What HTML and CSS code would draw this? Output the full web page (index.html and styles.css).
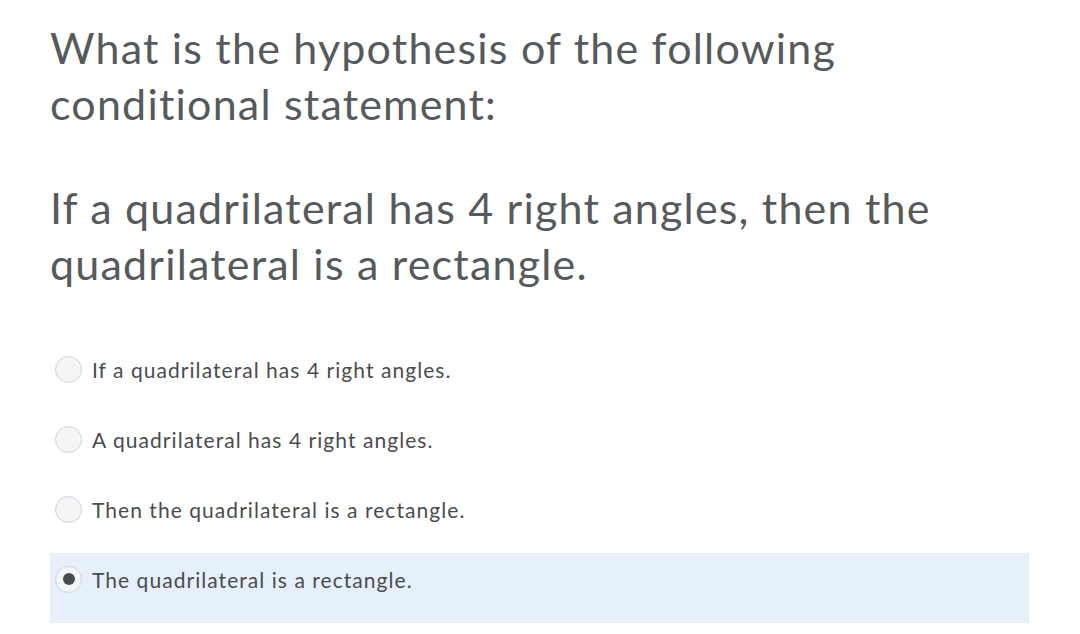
FILE: index.html
```html
<!DOCTYPE html>
<html>
<head>
<meta charset="utf-8">
<link rel="stylesheet" href="styles.css">
</head>
<body>
<div class="question">
  <p class="stem">What is the hypothesis of the following conditional statement:</p>
  <p class="stem stmt">If a quadrilateral has 4 right angles, then the quadrilateral is a rectangle.</p>
  <div class="options">
    <label class="opt"><span class="radio"></span><span class="txt">If a quadrilateral has 4 right angles.</span></label>
    <label class="opt"><span class="radio"></span><span class="txt">A quadrilateral has 4 right angles.</span></label>
    <label class="opt"><span class="radio"></span><span class="txt">Then the quadrilateral is a rectangle.</span></label>
    <label class="opt selected"><span class="radio"><span class="dot"></span></span><span class="txt">The quadrilateral is a rectangle.</span></label>
  </div>
</div>
</body>
</html>
```
FILE: styles.css
```css
html, body {
  margin: 0;
  padding: 0;
  background: #ffffff;
}
body {
  font-family: Lato, "Noto Sans", sans-serif;
  color: #565a5c;
}
.question {
  padding: 20px 51px 0 50px;
}
.stem {
  margin: 0;
  font-size: 43px;
  line-height: 56px;
  letter-spacing: 1.2px;
  color: #565a5c;
}
.stmt {
  margin-top: 48px;
}
.options {
  margin-top: 51px;
  display: flex;
  flex-direction: column;
}
.opt {
  display: flex;
  align-items: center;
  gap: 10px;
  height: 70px;
  box-sizing: border-box;
  padding: 0 5px 18px;
  font-size: 21px;
  letter-spacing: 1.05px;
  color: #494c4e;
}
.opt.selected {
  background: #e6f0fa;
}
.radio {
  width: 27px;
  height: 27px;
  box-sizing: border-box;
  border-radius: 50%;
  border: 1px solid #cfd3d8;
  background: #f4f5f7;
  display: flex;
  align-items: center;
  justify-content: center;
  flex: none;
}
.dot {
  width: 12px;
  height: 12px;
  border-radius: 50%;
  background: #494c4e;
}
```
